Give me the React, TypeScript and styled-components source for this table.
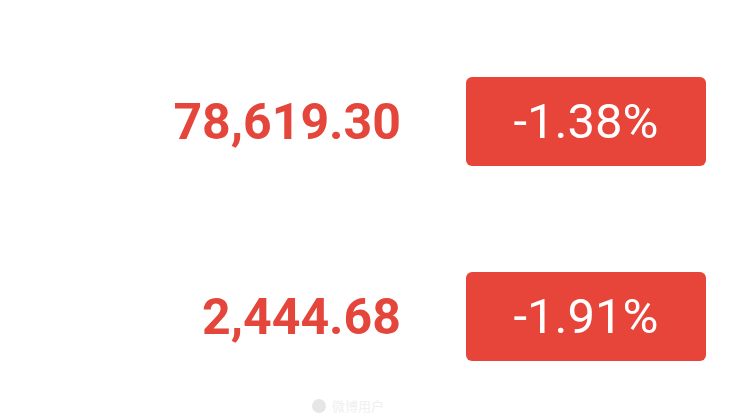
import React from 'react'
import styled, { createGlobalStyle } from 'styled-components'

const GlobalStyle = createGlobalStyle`
  html, body {
    margin: 0;
    padding: 0;
    background: #ffffff;
  }
  body {
    font-family: Roboto, "Liberation Sans", sans-serif;
  }
`

const Page = styled.div`
  width: 751px;
  height: 418px;
  box-sizing: border-box;
  padding: 77px 45px 0 0;
  display: flex;
  flex-direction: column;
  gap: 106px;
  position: relative;
  overflow: hidden;
`

const Row = styled.div`
  display: flex;
  justify-content: flex-end;
  align-items: center;
  gap: 65px;
  height: 89px;
`

const Price = styled.div`
  font-family: Roboto, "Liberation Sans", sans-serif;
  font-weight: 700;
  font-size: 50px;
  color: #e4463b;
  text-align: right;
  line-height: 1;
`

const Change = styled.div<{ $down?: boolean }>`
  width: 240px;
  height: 89px;
  border-radius: 6px;
  background: ${p => (p.$down ? '#e8453a' : '#2fa866')};
  color: #ffffff;
  display: flex;
  align-items: center;
  justify-content: center;
  font-family: Roboto, "Liberation Sans", sans-serif;
  font-weight: 400;
  font-size: 49px;
  line-height: 1;
`

const Watermark = styled.div`
  position: absolute;
  left: 312px;
  top: 396px;
  display: flex;
  align-items: center;
  gap: 6px;
  color: #f0f0f0;
  font-family: "Noto Sans CJK SC", sans-serif;
  font-size: 13px;
`

const Dot = styled.div`
  width: 14px;
  height: 14px;
  border-radius: 50%;
  background: #e6e6e6;
`

const rows = [
  { price: '78,619.30', change: '-1.38%' },
  { price: '2,444.68', change: '-1.91%' },
]

const App: React.FC = () => {
  return (
    <>
      <GlobalStyle />
      <Page>
        {rows.map(r => (
          <Row key={r.price}>
            <Price>{r.price}</Price>
            <Change $down={r.change.startsWith('-')}>{r.change}</Change>
          </Row>
        ))}
        <Watermark>
          <Dot />
          <span>微博用户</span>
        </Watermark>
      </Page>
    </>
  )
}

export default App
